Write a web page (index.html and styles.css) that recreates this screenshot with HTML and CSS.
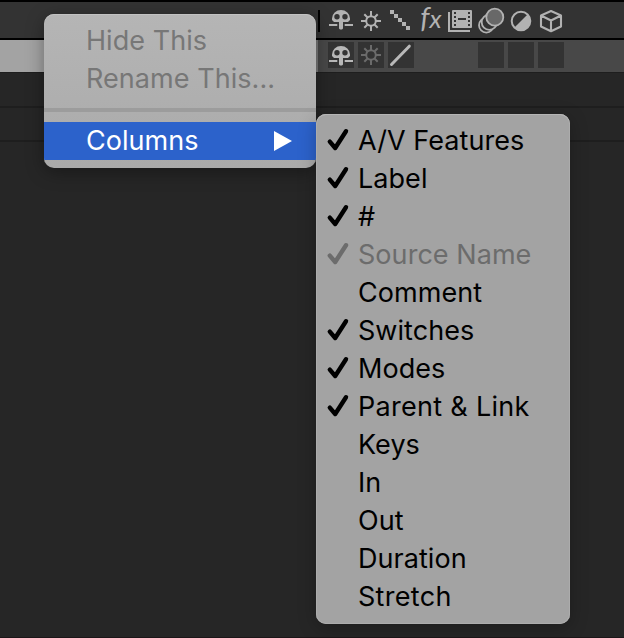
FILE: index.html
```html
<!DOCTYPE html>
<html lang="en">
<head>
<meta charset="utf-8">
<title>Timeline columns</title>
<link rel="stylesheet" href="styles.css">
</head>
<body>
<svg class="defs" aria-hidden="true">
  <symbol id="skull" viewBox="0 0 30 36"><path d="M8 22 6 20v-1.5a9 8.5 0 0 1 18 0V20l-2 2h-5v6.5l-1 1h-2l-1-1V22z"/><path d="M3 24h8.3v2H3zM18.7 24H27v2h-8.3z"/><circle class="hole" cx="11" cy="16.7" r="2.7"/><circle class="hole" cx="19" cy="16.7" r="2.7"/></symbol>
  <symbol id="sun" viewBox="0 0 30 36"><g fill="none" stroke="currentColor" stroke-width="2"><circle cx="15" cy="21" r="4.8"/><path d="M15 11v5M15 26v5M5 21h5M20 21h5M8.3 14.3l3.5 3.5M18.2 24.2l3.5 3.5M21.7 14.3l-3.5 3.5M11.8 24.2l-3.5 3.5"/></g></symbol>
  <symbol id="check" viewBox="0 0 24 24"><path d="M3.8 13.6 9.2 20 20 3.2" fill="none" stroke="currentColor" stroke-width="4.4" stroke-linecap="round" stroke-linejoin="round"/></symbol>
</svg>
<main class="panel">
  <div class="header">
    <span class="divider"></span>
    <svg class="icon"><use href="#skull"/></svg>
    <svg class="icon"><use href="#sun"/></svg>
    <svg class="icon" viewBox="0 0 30 36"><path d="M4 10h4v4H4zM8 14h4v4H8zM12 18h4v4h-4zM16 22h4v4h-4zM20 26h4v4h-4z"/></svg>
    <span class="icon fx"><span class="f">f</span>x</span>
    <svg class="icon" viewBox="0 0 30 36"><path d="M2 12h2v18h20v2H2z"/><rect x="6" y="10" width="20" height="18" rx="1"/><path class="hole" d="M8 12h2v2H8zM8 16h2v2H8zM8 20h2v2H8zM8 24h2v2H8zM22 12h2v2h-2zM22 16h2v2h-2zM22 20h2v2h-2zM22 24h2v2h-2zM12 18h8v2h-8z"/></svg>
    <svg class="icon" viewBox="0 0 30 36"><g class="bar" stroke="currentColor" stroke-width="1.8"><circle cx="10.3" cy="25.3" r="7.3"/><circle cx="13.3" cy="22.3" r="7.6"/><circle class="disc" cx="18.8" cy="17.2" r="8.5"/></g></svg>
    <svg class="icon" viewBox="0 0 30 36"><circle cx="15" cy="21" r="9.3" fill="none" stroke="currentColor" stroke-width="2"/><path d="M21.8 14.2A9.6 9.6 0 0 1 8.2 27.8z"/></svg>
    <svg class="icon" viewBox="0 0 30 36"><path d="M15 11 25 15.5v11L15 31.3 5 26.5v-11zM5 15.5l10 5 10-5M15 20.5v11" fill="none" stroke="currentColor" stroke-width="2.1" stroke-linejoin="round"/></svg>
  </div>
  <div class="layer">
    <div class="layer-name"></div>
    <div class="cells">
      <span class="cell"><svg class="icon"><use href="#skull"/></svg></span>
      <span class="cell dim"><svg class="icon"><use href="#sun"/></svg></span>
      <span class="cell"><svg class="icon slash" viewBox="0 0 30 36"><path d="M5.5 28.5 23.3 10.2" fill="none" stroke="currentColor" stroke-width="3" stroke-linecap="round"/></svg></span>
      <span></span><span></span>
      <span class="cell"></span><span class="cell"></span><span class="cell"></span>
    </div>
  </div>
  <div class="track first"></div>
  <div class="track"></div>
  <div class="rest"></div>
</main>
<nav class="menu main-menu">
  <div class="item disabled"><span>Hide This</span></div>
  <div class="item disabled"><span>Rename This...</span></div>
  <div class="separator"></div>
  <div class="item selected"><span>Columns</span><svg class="arrow" viewBox="0 0 18 20"><path d="M0 0 18 10 0 20z"/></svg></div>
</nav>
<nav class="menu submenu">
  <div class="item"><svg class="check"><use href="#check"/></svg><span>A/V Features</span></div>
  <div class="item"><svg class="check"><use href="#check"/></svg><span>Label</span></div>
  <div class="item"><svg class="check"><use href="#check"/></svg><span>#</span></div>
  <div class="item disabled"><svg class="check"><use href="#check"/></svg><span>Source Name</span></div>
  <div class="item"><span>Comment</span></div>
  <div class="item"><svg class="check"><use href="#check"/></svg><span>Switches</span></div>
  <div class="item"><svg class="check"><use href="#check"/></svg><span>Modes</span></div>
  <div class="item"><svg class="check"><use href="#check"/></svg><span class="wide">Parent &amp; Link</span></div>
  <div class="item"><span>Keys</span></div>
  <div class="item"><span>In</span></div>
  <div class="item"><span>Out</span></div>
  <div class="item"><span>Duration</span></div>
  <div class="item"><span class="wide">Stretch</span></div>
</nav>
</body>
</html>
```
FILE: styles.css
```css
* { box-sizing: border-box; }
body { margin: 0; width: 624px; height: 638px; overflow: hidden; background: #262626; font-family: Inter, "Liberation Sans", sans-serif; }
.defs { position: absolute; width: 0; height: 0; }
.panel { display: flex; flex-direction: column; height: 638px; }
.header { display: flex; height: 40px; padding-left: 318px; background: #333; border-top: 2px solid #000; border-bottom: 2px solid #000; color: #b2b2b2; }
.divider { width: 2px; height: 22px; margin: 8px 6px 0 0; background: #000; }
.icon { display: block; flex: none; width: 30px; height: 36px; margin-top: -2px; fill: currentColor; overflow: visible; }
.hole { fill: #333; }
.bar { fill: #333; }
.disc { fill: #686868; }
.fx { font: italic 400 26px/36px Lato, sans-serif; text-align: center; white-space: nowrap; }
.f { font-size: 29px; line-height: 1; }
.layer { display: flex; height: 32px; background: #484848; }
.layer-name { width: 318px; background: #a3a3a3; border-right: 2px solid #777; }
.cells { display: grid; grid-template-columns: repeat(8, 26px); gap: 4px; padding: 2px 0 0 10px; }
.cell { height: 26px; background: #333; color: #b8b8b8; }
.cell .icon { margin: -6px 0 0 -2px; }
.cell.dim { color: #6b6b6b; }
.cell.dim .icon { margin-top: -8px; }
.track { height: 34px; border-bottom: 2px solid #1e1e1e; }
.track.first { height: 36px; border-top: 1px solid #1e1e1e; }
.rest { flex: 1; border-bottom: 1px solid #1c1618; }
.menu { position: absolute; padding: 8px 0; border-radius: 10px; overflow: hidden; font-size: 27px; font-weight: 430; letter-spacing: 0.05px; color: #000; }
.main-menu { left: 44px; top: 14px; width: 272px; height: 154px; background: linear-gradient(#b5b5b5, #aaa); box-shadow: 0 4px 18px rgba(0, 0, 0, .35), inset 0 1px 0 #c2c2c2; }
.submenu { left: 316px; top: 114px; width: 254px; height: 510px; background: #a3a3a3; box-shadow: 0 4px 18px rgba(0, 0, 0, .25), inset 0 1px 0 #b5b5b5, inset 0 0 0 1px #acacac; }
.item { display: flex; align-items: center; height: 38px; padding-left: 42px; line-height: 38px; white-space: nowrap; }
.item.disabled { color: #777; }
.submenu .disabled { color: #6c6c6c; }
.wide { letter-spacing: 0.3px; }
.check { width: 24px; height: 24px; margin: -3px 8px 0 -32px; }
.separator { height: 4px; margin: 10px 0; background: #9c9c9c; }
.item.selected { background: #2c62cb; color: #fff; }
.arrow { width: 18px; height: 20px; margin: -1px 24px 0 auto; fill: #fff; }
```
